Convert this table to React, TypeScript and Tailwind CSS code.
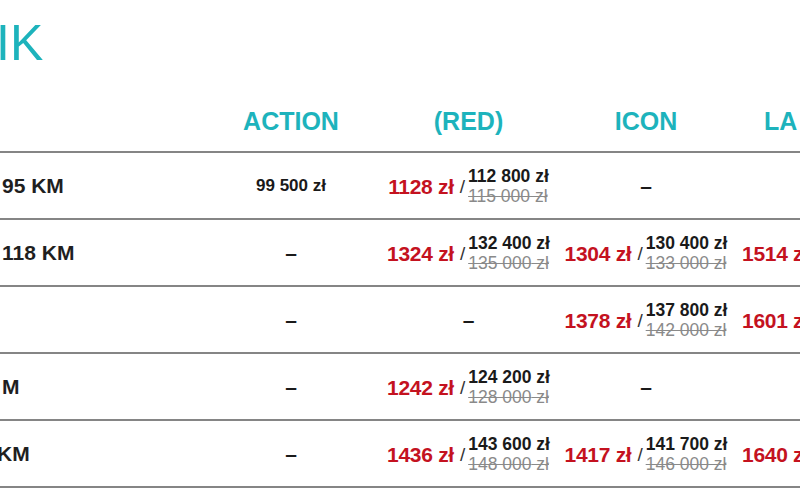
import React from "react";

type Offer = { rate: string; price: string; old: string };
type Cell = Offer | string | null;

type Row = {
  name: string;
  action: Cell;
  red: Cell;
  icon: Cell;
  laPrima: string | null;
};

const rows: Row[] = [
  { name: "95 KM", action: "99 500 zł", red: { rate: "1128", price: "112 800", old: "115 000" }, icon: null, laPrima: null },
  { name: "118 KM", action: null, red: { rate: "1324", price: "132 400", old: "135 000" }, icon: { rate: "1304", price: "130 400", old: "133 000" }, laPrima: "1514" },
  { name: "", action: null, red: null, icon: { rate: "1378", price: "137 800", old: "142 000" }, laPrima: "1601" },
  { name: "M", action: null, red: { rate: "1242", price: "124 200", old: "128 000" }, icon: null, laPrima: null },
  { name: "KM", action: null, red: { rate: "1436", price: "143 600", old: "148 000" }, icon: { rate: "1417", price: "141 700", old: "146 000" }, laPrima: "1640" },
];

const headers = ["ACTION", "(RED)", "ICON", "LA PRIMA"];

function Dash() {
  return <span className="text-[21px] leading-[20px] font-bold text-[#1a1a1a]">–</span>;
}

function PriceCell({ cell }: { cell: Cell }) {
  if (cell === null) {
    return (
      <div className="flex items-center justify-center">
        <Dash />
      </div>
    );
  }
  if (typeof cell === "string") {
    return (
      <div className="flex items-center justify-center">
        <span className="text-[17px] font-bold text-[#1a1a1a]">{cell}</span>
      </div>
    );
  }
  return (
    <div className="flex items-center justify-center">
      <span className="mt-[2px] text-[21px] font-bold text-[#c4121f] tracking-[-0.3px]">{cell.rate} zł</span>
      <span className="ml-[6px] mt-[3px] text-[19px] text-[#333]">/</span>
      <div className="ml-[3px] flex flex-col items-start text-[17.5px] leading-[20px]">
        <span className="font-bold text-[#1a1a1a]">{cell.price} zł</span>
        <span className="text-[#8a8a8a] line-through decoration-[#8a8a8a]">{cell.old} zł</span>
      </div>
    </div>
  );
}

export default function App() {
  return (
    <div className="w-[800px] h-[500px] overflow-hidden bg-white font-['Liberation_Sans',Arial,sans-serif]">
      {/* Tytuł */}
      <div className="pt-[18px] h-[69px]">
        <h1 className="-ml-[4px] text-[50px] leading-[50px] text-[#1db3bc]">IK</h1>
      </div>

      <div className="w-[913px]">
        <div className="grid grid-cols-[202px_178px_177px_178px_178px] h-[84px] items-end pb-[15px] border-b-2 border-[#858585]">
          <div />
          {headers.map((h) => (
            <div key={h} className="text-center text-[25px] leading-[30px] font-bold text-[#1db3bc] whitespace-nowrap">
              {h}
            </div>
          ))}
        </div>

        {rows.map((r, i) => (
          <div
            key={i}
            className="grid grid-cols-[202px_178px_177px_178px_178px] h-[67px] items-center border-b-2 border-[#858585]"
          >
            <div className={`text-[21px] font-bold text-[#1f1f1f] whitespace-nowrap ${r.name === "KM" ? "-ml-[3px]" : "pl-[2px]"}`}>
              {r.name}
            </div>
            <PriceCell cell={r.action} />
            <PriceCell cell={r.red} />
            <PriceCell cell={r.icon} />
            {r.laPrima ? (
              <div className="pl-[7px] mt-[2px] text-[21px] font-bold text-[#c4121f] tracking-[-0.3px] whitespace-nowrap">
                {r.laPrima} zł
              </div>
            ) : (
              <div className="flex justify-center">
                <Dash />
              </div>
            )}
          </div>
        ))}
      </div>
    </div>
  );
}
